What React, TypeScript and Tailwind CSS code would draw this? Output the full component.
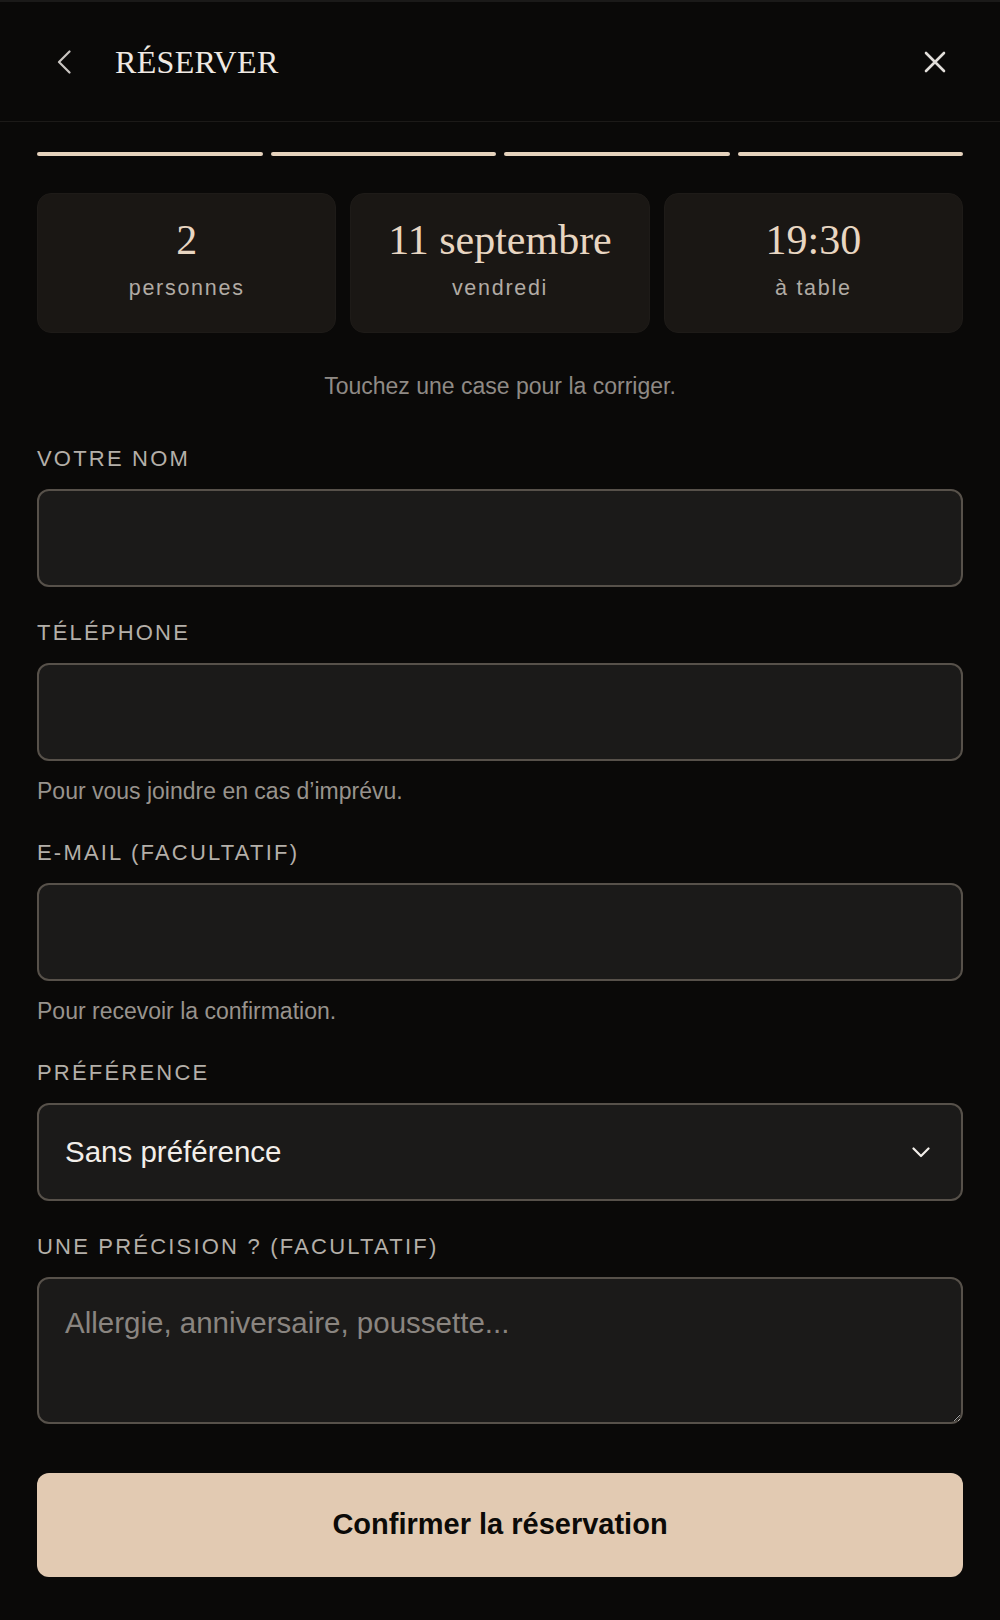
import React from "react";

const sans = "font-['Liberation_Sans','Helvetica',Arial,sans-serif]";
const serif = "font-['Liberation_Serif','Times_New_Roman',serif]";

function Label({ children }: { children: React.ReactNode }) {
  return (
    <div className={`${sans} text-[22px] leading-[28px] tracking-[0.1em] text-[#b4afa9] uppercase`}>
      {children}
    </div>
  );
}

function Helper({ children }: { children: React.ReactNode }) {
  return (
    <div className={`${sans} mt-[14px] text-[23px] leading-[32px] text-[#98938d]`}>{children}</div>
  );
}

function Input() {
  return (
    <input
      type="text"
      className={`${sans} mt-4 block h-[98px] w-full rounded-[12px] border-2 border-[#57514a] bg-[#1b1a19] px-[26px] text-[29px] text-[#f0ece8] outline-none`}
    />
  );
}

function Card({ big, small }: { big: string; small: string }) {
  return (
    <div className="flex h-[140px] flex-col items-center justify-center gap-[11px] rounded-[14px] border border-[#1e1b18] bg-[#1a1714] pb-[8px]">
      <div className={`${serif} text-[42px] leading-[46px] text-[#e8d6c2]`}>{big}</div>
      <div className={`${sans} text-[21.5px] leading-[28px] tracking-[0.08em] text-[#b1aba4]`}>{small}</div>
    </div>
  );
}

export default function App() {
  return (
    <div className="min-h-[1620px] w-full bg-[#0a0908]">
      {/* Header */}
      <header className="flex h-[122px] items-center justify-between border-t-2 border-b border-t-[#1b1a19] border-b-[#1c1a18] bg-[#0a0908] pl-[57px] pr-[54px]">
        <div className="flex items-center">
          <svg width="14" height="24" viewBox="0 0 14 24" fill="none" className="block">
            <polyline points="12.5,1.5 2,12 12.5,22.5" stroke="#c9c5c1" strokeWidth="2.2" strokeLinecap="round" strokeLinejoin="round" />
          </svg>
          <h1 className={`${serif} ml-[44px] text-[32px] leading-[40px] tracking-[0.01em] text-[#efe9e3]`}>RÉSERVER</h1>
        </div>
        <svg width="22" height="22" viewBox="0 0 22 22" fill="none" className="block">
          <path d="M2 2 L20 20 M20 2 L2 20" stroke="#e2deda" strokeWidth="2.6" strokeLinecap="round" />
        </svg>
      </header>

      <main className="px-[37px] pb-[44px]">
        {/* Progress */}
        <div className="mt-[30px] flex gap-2">
          <div className="h-[4px] flex-1 rounded-full bg-[#e6d3bd]" />
          <div className="h-[4px] flex-1 rounded-full bg-[#e6d3bd]" />
          <div className="h-[4px] flex-1 rounded-full bg-[#e6d3bd]" />
          <div className="h-[4px] flex-1 rounded-full bg-[#e6d3bd]" />
        </div>

        {/* Summary cards */}
        <div className="mt-[37px] grid grid-cols-3 gap-[14px]">
          <Card big="2" small="personnes" />
          <Card big="11 septembre" small="vendredi" />
          <Card big="19:30" small="à table" />
        </div>

        <p className={`${sans} mt-[37px] text-center text-[23px] leading-[32px] text-[#8f8a85]`}>
          Touchez une case pour la corriger.
        </p>

        {/* Form */}
        <div className="mt-[43px] flex flex-col gap-[32px]">
          <div>
            <Label>Votre nom</Label>
            <Input />
          </div>
          <div>
            <Label>Téléphone</Label>
            <Input />
            <Helper>Pour vous joindre en cas d’imprévu.</Helper>
          </div>
          <div>
            <Label>E-mail (facultatif)</Label>
            <Input />
            <Helper>Pour recevoir la confirmation.</Helper>
          </div>
          <div>
            <Label>Préférence</Label>
            <div className="mt-4 flex h-[98px] w-full items-center justify-between rounded-[12px] border-2 border-[#57514a] bg-[#1b1a19] pl-[26px] pr-[31px]">
              <span className={`${sans} text-[29.5px] text-[#f2eee9]`}>Sans préférence</span>
              <svg width="18" height="11" viewBox="0 0 18 11" fill="none" className="block">
                <polyline points="1.5,1.5 9,9 16.5,1.5" stroke="#f2eee9" strokeWidth="2.2" strokeLinecap="round" strokeLinejoin="round" />
              </svg>
            </div>
          </div>
          <div>
            <Label>Une précision ? (facultatif)</Label>
            <textarea
              placeholder="Allergie, anniversaire, poussette..."
              className={`${sans} mt-4 block h-[147px] w-full resize-y rounded-[12px] border-2 border-[#57514a] bg-[#1b1a19] px-[26px] pt-[26px] text-[29.5px] leading-[36px] text-[#f0ece8] placeholder:text-[#8a8580] outline-none`}
            />
          </div>
        </div>

        <button
          className={`${sans} mt-[49px] flex h-[104px] w-full items-center justify-center rounded-[12px] bg-[#e2cab2] text-[29px] font-bold text-[#0c0a08]`}
        >
          Confirmer la réservation
        </button>
      </main>
    </div>
  );
}
